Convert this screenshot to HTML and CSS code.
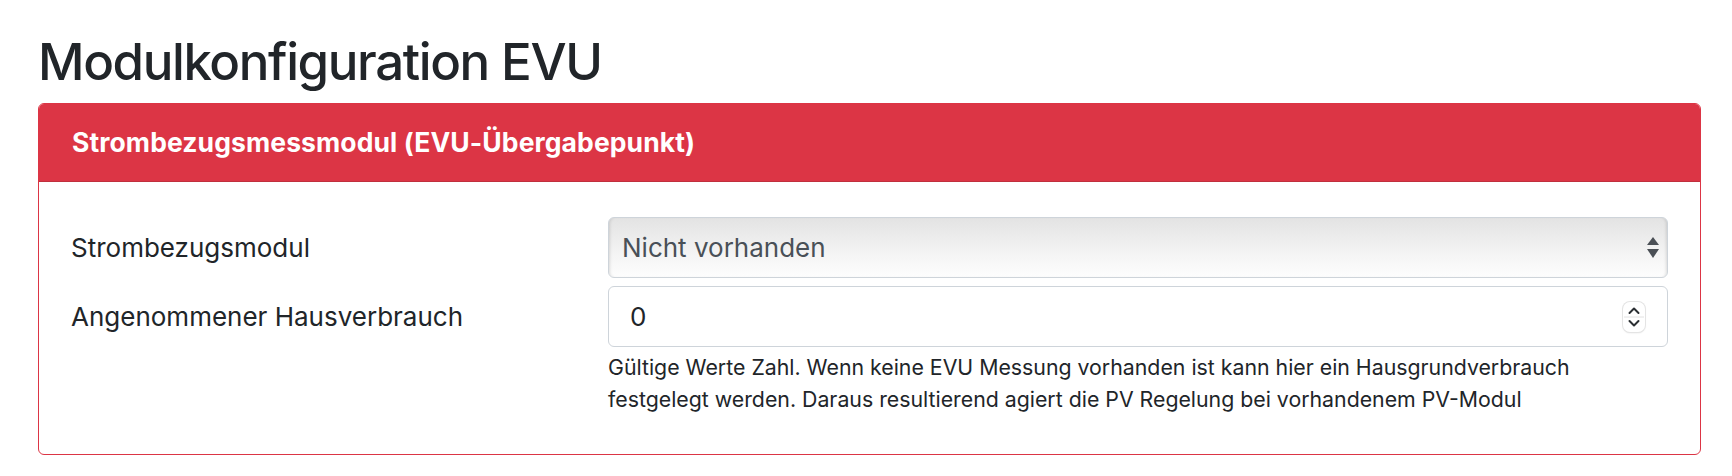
FILE: index.html
```html
<!DOCTYPE html>
<html lang="de">

<head>
  <meta charset="UTF-8">
  <title>Modulkonfiguration EVU</title>
  <link rel="stylesheet" href="styles.css">
</head>

<body>
  <div class="container">
    <h1>Modulkonfiguration EVU</h1>

    <!-- EVU Karte -->
    <div class="card">
      <div class="card-header">Strombezugsmessmodul (EVU-Übergabepunkt)</div>
      <div class="card-body">
        <div class="form-row">
          <label class="form-label" for="evuModul">Strombezugsmodul</label>
          <div class="select-wrap">
            <select id="evuModul" class="form-select">
              <option selected>Nicht vorhanden</option>
              <option>SDM630</option>
              <option>MQTT</option>
            </select>
            <svg class="select-arrows" width="14" height="24" viewBox="0 0 14 24">
              <path d="M7 1 L13 9 L1 9 Z" fill="#4a4f55" />
              <path d="M1 13 L13 13 L7 22 Z" fill="#4a4f55" />
            </svg>
          </div>
        </div>
        <div class="form-row">
          <label class="form-label" for="hausverbrauch">Angenommener Hausverbrauch</label>
          <div class="input-wrap">
            <input id="hausverbrauch" class="form-control" type="number" min="0" value="0">
            <span class="stepper">
              <svg width="22" height="30" viewBox="0 0 22 30">
                <path d="M6.5 11 L11 6.5 L15.5 11" fill="none" stroke="#2b2f33" stroke-width="2" stroke-linecap="round" stroke-linejoin="round" />
                <line x1="1" y1="15" x2="21" y2="15" stroke="#e2e2e2" stroke-width="1" />
                <path d="M6.5 19 L11 23.5 L15.5 19" fill="none" stroke="#2b2f33" stroke-width="2" stroke-linecap="round" stroke-linejoin="round" />
              </svg>
            </span>
          </div>
        </div>
        <div class="form-row">
          <div></div>
          <small class="form-text">Gültige Werte Zahl. Wenn keine EVU Messung vorhanden ist kann hier ein Hausgrundverbrauch festgelegt werden. Daraus resultierend agiert die PV Regelung bei vorhandenem PV-Modul</small>
        </div>
      </div>
    </div>
  </div>
</body>

</html>
```

FILE: styles.css
```css
/* Grundlayout */
html,
body {
  margin: 0;
  padding: 0;
  background-color: #fff;
  color: #212529;
  font-family: Inter, "Noto Sans", sans-serif;
  font-size: 26px;
  line-height: 1.5;
}

.container {
  padding: 31px 31px 0 38px;
}

h1 {
  margin: 0 0 11px;
  font-size: 51px;
  font-weight: 500;
  line-height: 1.2;
  letter-spacing: -1.4px;
}

/* Karte */
.card {
  border: 1px solid #dc3545;
  border-radius: 6px;
}

.card-header {
  background-color: #dc3545;
  color: #fff;
  font-weight: 700;
  font-size: 26.5px;
  letter-spacing: 0.1px;
  padding: 19px 32px 19px 33px;
  line-height: 39px;
  border-bottom: 1px solid #c0303d;
  border-radius: 5px 5px 0 0;
}

.card-body {
  padding: 35px 32px 39px;
}

/* Formularzeilen */
.form-row {
  display: grid;
  grid-template-columns: 537px 1fr;
  align-items: center;
  margin-bottom: 8px;
}

.form-row:last-child {
  margin-bottom: 0;
  margin-top: -3px;
}

.form-label {
  display: block;
}

.select-wrap,
.input-wrap {
  position: relative;
}

.form-select,
.form-control {
  display: block;
  box-sizing: border-box;
  width: 100%;
  height: 61px;
  margin: 0;
  font-family: inherit;
  font-size: 26px;
  color: #495057;
  border: 1px solid #ced4da;
  border-radius: 6px;
  outline: none;
}

/* Select im Safari-Look */
.form-select {
  appearance: none;
  -webkit-appearance: none;
  padding: 0 40px 0 13px;
  background: linear-gradient(#e3e3e3, #f4f4f4 60%, #fdfdfd);
  box-shadow: inset 3px 0 3px -2px rgba(0, 0, 0, 0.12), inset -3px 0 3px -2px rgba(0, 0, 0, 0.12);
}

.select-arrows {
  position: absolute;
  right: 8px;
  top: 19px;
  pointer-events: none;
}

.form-control {
  padding: 0 60px 0 21px;
  background-color: #fff;
  color: #212529;
  -moz-appearance: textfield;
}

.form-control::-webkit-inner-spin-button,
.form-control::-webkit-outer-spin-button {
  -webkit-appearance: none;
  margin: 0;
}

.stepper {
  position: absolute;
  right: 23px;
  top: 16px;
  width: 22px;
  height: 30px;
  border-radius: 7px;
  background: #fff;
  box-shadow: 0 0 0 1px #e4e4e4, 0 1px 2px rgba(0, 0, 0, 0.12);
  pointer-events: none;
}

.stepper svg {
  display: block;
}

/* Hilfetext */
.form-text {
  display: block;
  max-width: 1010px;
  font-size: 21.3px;
  line-height: 31.5px;
  color: #212529;
}
```
